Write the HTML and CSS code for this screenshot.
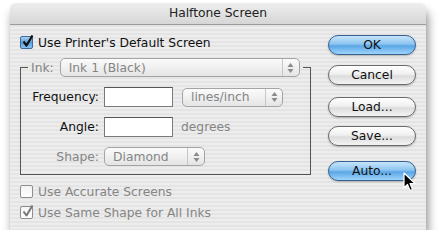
FILE: index.html
```html
<!DOCTYPE html>
<html lang="en">
<head>
    <meta charset="UTF-8">
    <title>Halftone Screen</title>
    <link rel="stylesheet" href="styles.css">
</head>
<body>

    <div class="window">
        <div class="titlebar">Halftone Screen</div>

        <div class="content">
            <!-- left side: options -->
            <div class="main">
                <label class="check first">
                    <span class="box box-on">
                        <svg width="13" height="13" viewBox="0 0 13 13"><path d="M2.5 6.5 L5.5 10.5 L11.5 0.5" fill="none" stroke="#111" stroke-width="2.2" stroke-linejoin="round"/></svg>
                    </span>
                    Use Printer's Default Screen
                </label>

                <fieldset class="group">
                    <legend class="ink-row">
                        <span class="dim">Ink:</span>
                        <span class="popup ink-popup">
                            <span class="popup-text">Ink 1 (Black)</span>
                            <span class="arrows"><svg width="7" height="10" viewBox="0 0 7 10"><path d="M3.5 0 L6.5 4 L0.5 4 Z M0.5 6 L6.5 6 L3.5 10 Z" fill="#8a8a8a"/></svg></span>
                        </span>
                    </legend>

                    <div class="fields">
                        <span class="lbl">Frequency:</span>
                        <span class="textbox"></span>
                        <span class="popup unit-popup">
                            <span class="popup-text">lines/inch</span>
                            <span class="arrows"><svg width="7" height="10" viewBox="0 0 7 10"><path d="M3.5 0 L6.5 4 L0.5 4 Z M0.5 6 L6.5 6 L3.5 10 Z" fill="#8a8a8a"/></svg></span>
                        </span>

                        <span class="lbl">Angle:</span>
                        <span class="textbox"></span>
                        <span class="dim unit">degrees</span>

                        <span class="lbl dim">Shape:</span>
                        <span class="popup shape-popup">
                            <span class="popup-text">Diamond</span>
                            <span class="arrows"><svg width="7" height="10" viewBox="0 0 7 10"><path d="M3.5 0 L6.5 4 L0.5 4 Z M0.5 6 L6.5 6 L3.5 10 Z" fill="#8a8a8a"/></svg></span>
                        </span>
                    </div>
                </fieldset>

                <label class="check dim second">
                    <span class="box"></span>
                    Use Accurate Screens
                </label>
                <label class="check dim third">
                    <span class="box">
                        <svg width="13" height="13" viewBox="0 0 13 13"><path d="M2.5 6.5 L5.5 10.5 L11.5 0.5" fill="none" stroke="#777" stroke-width="2" stroke-linejoin="round"/></svg>
                    </span>
                    Use Same Shape for All Inks
                </label>
            </div>

            <!-- right side: buttons -->
            <div class="buttons">
                <button class="btn btn-blue btn-ok">OK</button>
                <button class="btn btn-cancel">Cancel</button>
                <button class="btn btn-load">Load...</button>
                <button class="btn btn-save">Save...</button>
                <button class="btn btn-blue btn-auto">Auto...</button>
            </div>
        </div>

        <!-- mouse pointer over Auto... -->
        <svg class="cursor" width="13" height="20" viewBox="0 0 13 20"><path d="M1 1 L1 16 L4.5 12.5 L7 18.5 L9.5 17.5 L7 11.5 L12 11.5 Z" fill="#000" stroke="#fff" stroke-width="1.2" stroke-linejoin="round"/></svg>
    </div>

</body>
</html>
```

FILE: styles.css
```css
body {
    margin: 0;
    padding: 0;
    background: #fff;
    font-family: "DejaVu Sans", Verdana, sans-serif;
    font-size: 12.3px;
    color: #111;
}

/* ウィンドウ本体 */
.window {
    position: relative;
    width: 416px;
    height: 227px;
    margin: 3px 0 0 10px;
    border-radius: 6px 6px 0 0;
    background: repeating-linear-gradient(to bottom, #ededed 0, #ededed 2px, #e4e4e4 2px, #e4e4e4 4px);
    box-shadow: 2px 8px 10px rgba(0, 0, 0, 0.45);
}

.titlebar {
    height: 21px;
    line-height: 21px;
    text-align: center;
    color: #222;
    border-radius: 6px 6px 0 0;
    border-bottom: 1px solid #9a9a9a;
    background: linear-gradient(to bottom, #eeeeee, #d6d6d6);
}

.content {
    display: flex;
    padding-left: 10px;
}

.main {
    width: 291px;
}

.dim {
    color: #858585;
}

/* チェックボックス */
.check {
    display: flex;
    align-items: center;
    gap: 5px;
    height: 13px;
}

.check.first {
    margin-top: 11px;
}

.check.second {
    margin-top: 10px;
}

.check.third {
    margin-top: 8px;
}

.box {
    width: 11px;
    height: 11px;
    border: 1px solid #8e8e8e;
    border-radius: 2px;
    background: linear-gradient(to bottom, #f4f4f4, #ffffff);
    position: relative;
    flex: none;
}

.box svg {
    position: absolute;
    left: 0;
    top: -2px;
}

.box-on {
    border-color: #3e6a9a;
    background: linear-gradient(to bottom, #a9d0f0, #5aa0dc 50%, #86c2f0);
}

/* グループボックス */
.group {
    margin: 9px 0 0 0;
    padding: 0 0 8px 0;
    border: 1px solid #555;
    min-width: 0;
}

.ink-row {
    display: flex;
    align-items: center;
    gap: 6px;
    margin-left: 7px;
    padding: 0 3px;
}

.popup {
    display: flex;
    align-items: center;
    height: 17px;
    border: 1px solid #a4a4a4;
    border-radius: 5px;
    background: linear-gradient(to bottom, #fbfbfb, #eeeeee 60%, #e4e4e4);
    color: #858585;
}

.popup-text {
    flex: 1;
    padding-left: 8px;
}

.arrows {
    width: 16px;
    height: 100%;
    border-left: 1px solid #c6c6c6;
    display: flex;
    align-items: center;
    justify-content: center;
}

.ink-popup {
    width: 238px;
}

.fields {
    display: grid;
    grid-template-columns: 78px 69px 1fr;
    column-gap: 5px;
    row-gap: 10px;
    align-items: center;
    margin-top: 10px;
}

.lbl {
    text-align: right;
}

.textbox {
    height: 18px;
    border: 1px solid #7a7a7a;
    border-top-color: #555;
    background: #fff;
}

.unit-popup {
    width: 99px;
    margin-left: 4px;
}

.unit {
    margin-left: 3px;
}

.shape-popup {
    width: 99px;
    grid-column: 2 / span 2;
}

/* ボタン */
.buttons {
    display: flex;
    flex-direction: column;
    margin-left: 17px;
}

.btn {
    width: 88px;
    height: 20px;
    border: 1px solid #6a6a6a;
    border-radius: 10px;
    font-family: inherit;
    font-size: 12.3px;
    color: #111;
    padding: 0;
    background: linear-gradient(to bottom, #ffffff, #f0f0f0 45%, #dcdcdc 55%, #f4f4f4);
    box-shadow: 0 1px 2px rgba(0, 0, 0, 0.25);
}

.btn-blue {
    border-color: #35608f;
    background: linear-gradient(to bottom, #c8e4fa, #8cc4f0 45%, #5aa6e6 55%, #9ed4fb);
}

.btn-ok {
    margin-top: 10px;
}

.btn-cancel {
    margin-top: 10px;
}

.btn-load {
    margin-top: 12px;
}

.btn-save {
    margin-top: 9px;
}

.btn-auto {
    margin-top: 15px;
}

.cursor {
    position: absolute;
    left: 393px;
    top: 169px;
}
```
